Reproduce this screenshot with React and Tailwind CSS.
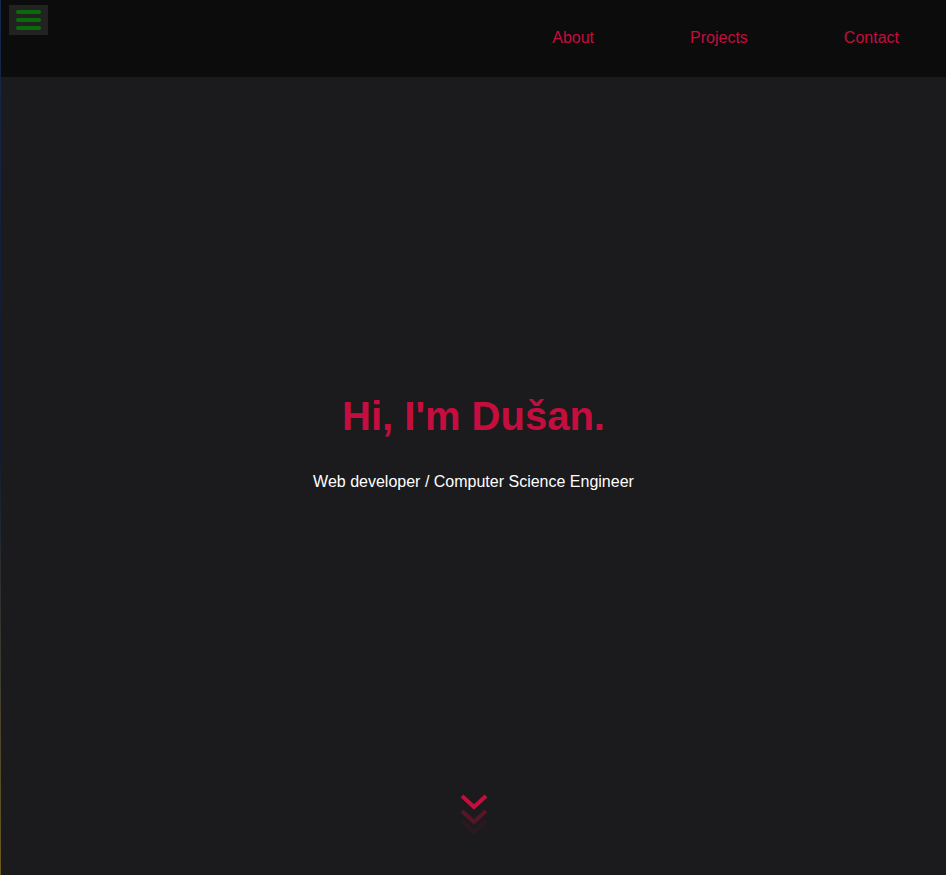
const links = ['About', 'Projects', 'Contact'];

const Chevron = ({ className }) => (
  <svg viewBox="0 0 28 16" className={className} fill="none">
    <path d="M2 2 L14 13 L26 2" stroke="currentColor" strokeWidth="4" />
  </svg>
);

const App = () => {
  return (
    <div
      className="flex h-[875px] w-full bg-[#1b1b1d] text-white"
      style={{ fontFamily: '"Liberation Sans", Arial, sans-serif' }}
    >
      {/* thin edge from background image */}
      <div className="w-px shrink-0 bg-linear-to-b from-[#16284d] via-[#101a30] to-[#6b5a1a]" />

      <div className="flex flex-1 flex-col">
        {/* Header */}
        <header className="flex h-[77px] shrink-0 items-start justify-between bg-[#0c0c0c]">
          <button className="ml-[8px] mt-[5px] flex h-[30px] w-[39px] flex-col items-center justify-center gap-[4px] bg-[#222222]">
            <span className="h-[4px] w-[25px] rounded-full bg-[#0a6a0a]" />
            <span className="h-[4px] w-[25px] rounded-full bg-[#0a6a0a]" />
            <span className="h-[4px] w-[25px] rounded-full bg-[#0a6a0a]" />
          </button>

          <nav className="mr-[47px] mt-[28px] flex gap-[96px]">
            {links.map((l) => (
              <a key={l} className="text-[16px] leading-[20px] text-[#c50d3e]">
                {l}
              </a>
            ))}
          </nav>
        </header>

        {/* Hero */}
        <main className="flex flex-1 flex-col items-center">
          <h1 className="mt-[316px] text-[40px] font-bold leading-[46px] text-[#c50d3e]">
            Hi, I'm Dušan.
          </h1>
          <p className="mt-[33px] text-[16px] leading-[20px] text-white">
            Web developer / Computer Science Engineer
          </p>

          <div className="mt-[302px] flex flex-col items-center">
            <Chevron className="h-[16px] w-[28px] text-[#c50d3e]" />
            <Chevron className="-mt-[1px] h-[16px] w-[28px] text-[#c50d3e]/35" />
            <Chevron className="-mt-[6px] h-[16px] w-[28px] text-[#c50d3e]/10" />
          </div>
        </main>
      </div>
    </div>
  );
};

export default App;
